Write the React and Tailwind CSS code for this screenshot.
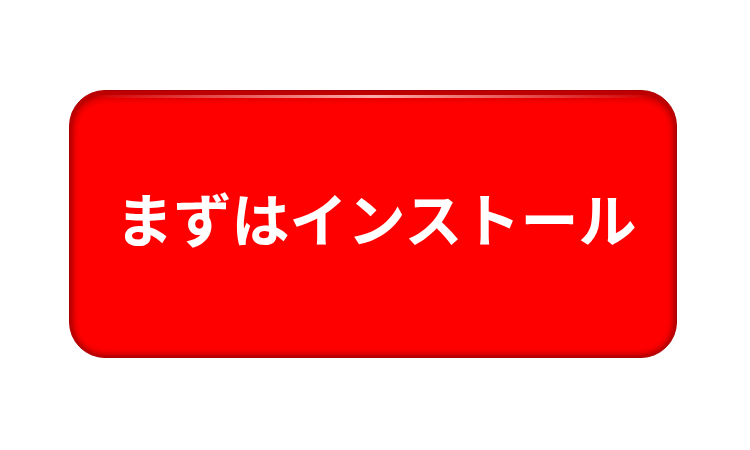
import React from 'react';

export default function App() {
  return (
    <div className="w-[750px] h-[450px] bg-white flex items-center justify-center">
      <button
        className="relative ml-[-4px] mt-[-2px] w-[608px] h-[268px] rounded-[36px] bg-[#ff0000] flex items-center justify-center border border-[#a80000] shadow-[inset_0_0_0_2px_#c00000,inset_0_6px_8px_rgba(120,0,0,0.55),inset_0_-3px_6px_rgba(120,0,0,0.35),inset_3px_0_6px_rgba(120,0,0,0.3),inset_-3px_0_6px_rgba(120,0,0,0.3)]"
      >
        <span className="absolute left-[24px] right-[24px] top-[4px] h-[3px] rounded-full bg-gradient-to-r from-transparent via-[#ffc0c0] to-transparent opacity-90" />
        <span className="text-white font-bold text-[58px] leading-none mt-[-14px] ml-[6px] font-['Noto_Sans_CJK_JP',sans-serif]">
          まずはインストール
        </span>
      </button>
    </div>
  );
}
